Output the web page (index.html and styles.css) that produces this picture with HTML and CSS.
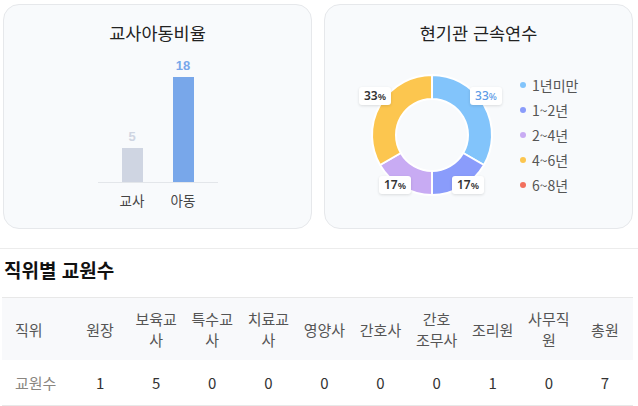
FILE: index.html
```html
<!DOCTYPE html>
<html lang="ko">
<head>
<meta charset="utf-8">
<title>교원 현황</title>
<link rel="stylesheet" href="styles.css">
</head>
<body>
  <div class="cards">
    <section class="card">
      <h2 class="card-title">교사아동비율</h2>
      <div class="bar-chart">
        <div class="plot">
          <div class="bar-col">
            <span class="bar-value teacher-text">5</span>
            <div class="bar teacher" style="height:34px"></div>
          </div>
          <div class="bar-col">
            <span class="bar-value child-text">18</span>
            <div class="bar child" style="height:105px"></div>
          </div>
        </div>
        <div class="categories">
          <span class="cat">교사</span>
          <span class="cat">아동</span>
        </div>
      </div>
    </section>

    <section class="card">
      <h2 class="card-title">현기관 근속연수</h2>
      <div class="donut-body">
        <div class="donut-wrap">
          <svg class="donut" width="150" height="140" viewBox="0 0 150 140">
            <path d="M75 10 A60 60 0 0 1 126.96 100 L106.18 88 A36 36 0 0 0 75 34 Z" fill="#82c4fb" stroke="#fff" stroke-width="2"/>
            <path d="M126.96 100 A60 60 0 0 1 75 130 L75 106 A36 36 0 0 0 106.18 88 Z" fill="#8a9cfb" stroke="#fff" stroke-width="2"/>
            <path d="M75 130 A60 60 0 0 1 23.04 100 L43.82 88 A36 36 0 0 0 75 106 Z" fill="#c8abf3" stroke="#fff" stroke-width="2"/>
            <path d="M23.04 100 A60 60 0 0 1 75 10 L75 34 A36 36 0 0 0 43.82 88 Z" fill="#fcc64f" stroke="#fff" stroke-width="2"/>
          </svg>
          <span class="pct pct-tr active">33<small>%</small></span>
          <span class="pct pct-br">17<small>%</small></span>
          <span class="pct pct-bl">17<small>%</small></span>
          <span class="pct pct-tl">33<small>%</small></span>
        </div>
        <ul class="legend">
          <li><i class="dot c1"></i>1년미만</li>
          <li><i class="dot c2"></i>1~2년</li>
          <li><i class="dot c3"></i>2~4년</li>
          <li><i class="dot c4"></i>4~6년</li>
          <li><i class="dot c5"></i>6~8년</li>
        </ul>
      </div>
    </section>
  </div>

  <hr class="divider">

  <h3 class="section-title">직위별 교원수</h3>
  <table class="staff">
    <colgroup>
      <col class="col-first">
      <col span="10">
    </colgroup>
    <thead>
      <tr>
        <th class="first">직위</th>
        <th>원장</th>
        <th>보육교사</th>
        <th>특수교사</th>
        <th>치료교사</th>
        <th>영양사</th>
        <th>간호사</th>
        <th>간호<br>조무사</th>
        <th>조리원</th>
        <th>사무직원</th>
        <th>총원</th>
      </tr>
    </thead>
    <tbody>
      <tr>
        <td class="first">교원수</td>
        <td>1</td>
        <td>5</td>
        <td>0</td>
        <td>0</td>
        <td>0</td>
        <td>0</td>
        <td>0</td>
        <td>1</td>
        <td>0</td>
        <td>7</td>
      </tr>
    </tbody>
  </table>
</body>
</html>
```

FILE: styles.css
```css
* {
  box-sizing: border-box;
}

body {
  margin: 0;
  background: #ffffff;
  font-family: "Noto Sans CJK KR", "Noto Sans", sans-serif;
  color: #333;
}

.cards {
  display: grid;
  grid-template-columns: 1fr 1fr;
  gap: 12px;
  margin: 4px 5px 0 3px;
}

.card {
  height: 225px;
  border: 1px solid #e6e8eb;
  border-radius: 16px;
  background: #f8fafc;
}

.card-title {
  margin: 0;
  padding-top: 16px;
  height: 40px;
  line-height: 24px;
  font-size: 17.5px;
  font-weight: 400;
  text-align: center;
  color: #222;
}

/* bar chart */
.bar-chart {
  width: 120px;
  margin: 0 auto;
}

.plot {
  height: 138px;
  display: flex;
  justify-content: center;
  align-items: flex-end;
  gap: 30px;
  border-bottom: 1px solid #e3e6ea;
}

.bar-col {
  width: 21px;
  display: flex;
  flex-direction: column;
  align-items: center;
}

.bar-value {
  font-family: "Liberation Sans", Arial, sans-serif;
  font-weight: 700;
  font-size: 13px;
  line-height: 16px;
  margin-bottom: 3px;
}

.teacher-text { color: #cfd5e2; }
.child-text { color: #78a7ea; }

.bar {
  width: 21px;
}

.bar.teacher { background: #cfd5e2; }
.bar.child { background: #78a7ea; }

.categories {
  display: flex;
  justify-content: center;
  gap: 30px;
  margin-top: 7px;
}

.cat {
  width: 21px;
  display: flex;
  justify-content: center;
  white-space: nowrap;
  font-size: 13.5px;
  line-height: 20px;
  color: #444;
}

/* donut */
.donut-body {
  display: flex;
  align-items: center;
  padding-left: 32px;
  margin-top: 20px;
}

.donut-wrap {
  position: relative;
  width: 150px;
  height: 140px;
  flex: none;
}

.donut {
  display: block;
}

.pct {
  position: absolute;
  width: 32px;
  height: 18px;
  background: #fff;
  border-radius: 3px;
  box-shadow: 0 1px 3px rgba(0, 0, 0, 0.12);
  font-family: "Noto Sans", sans-serif;
  font-size: 12px;
  font-weight: 600;
  line-height: 18px;
  text-align: center;
  color: #333;
}

.pct small {
  font-size: 9.5px;
}

.pct.active {
  color: #5b9ae6;
  font-weight: 500;
}

.pct-tr { left: 113px; top: 22px; }
.pct-tl { left: 2px; top: 22px; }
.pct-bl { left: 22px; top: 111px; }
.pct-br { left: 95px; top: 111px; }

.legend {
  list-style: none;
  margin: 0 0 0 13px;
  padding: 0;
}

.legend li {
  display: flex;
  align-items: center;
  height: 25px;
  font-size: 14px;
  color: #555;
}

.dot {
  width: 6px;
  height: 6px;
  border-radius: 50%;
  margin-right: 6px;
  flex: none;
}

.c1 { background: #82c4fb; }
.c2 { background: #8a9cfb; }
.c3 { background: #c8abf3; }
.c4 { background: #fcc64f; }
.c5 { background: #f2705e; }

/* staff table */
.divider {
  margin: 19px 0 0;
  border: 0;
  border-top: 1px solid #ececec;
  height: 0;
}

.section-title {
  margin: 8px 0 0 4px;
  font-size: 19px;
  line-height: 26px;
  font-weight: 700;
  color: #111;
}

.staff {
  margin: 14px 0 0 2px;
  width: 631px;
  table-layout: fixed;
  border-collapse: collapse;
  font-size: 15px;
}

.col-first {
  width: 70px;
}

.staff th {
  padding: 10px 6px;
  line-height: 21px;
  font-weight: 400;
  color: #555;
  background: #f8f9fb;
  border-top: 1px solid #e8e8e8;
  text-align: center;
}

.staff td {
  padding: 12px 6px;
  line-height: 21px;
  text-align: center;
  color: #333;
  border-bottom: 1px solid #e8e8e8;
}

.staff .first {
  text-align: left;
  padding-left: 13px;
}

.staff td.first {
  color: #8a8680;
}
```
